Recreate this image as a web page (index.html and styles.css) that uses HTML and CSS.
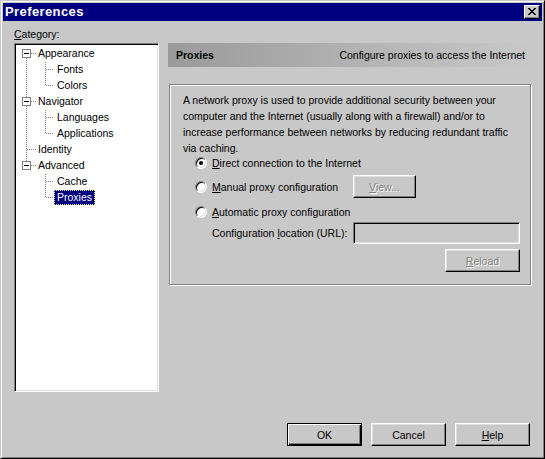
FILE: index.html
```html
<!DOCTYPE html>
<html>
<head>
<meta charset="utf-8">
<link rel="stylesheet" href="styles.css">
</head>
<body>
<div class="window">
  <div class="titlebar">
    <span class="title">Preferences</span>
    <div class="close">
      <svg width="8" height="7" viewBox="0 0 8 7" shape-rendering="crispEdges">
        <path d="M0 0h2v1h-2zM6 0h2v1h-2zM1 1h2v1h-2zM5 1h2v1h-2zM2 2h4v1h-4zM3 3h2v1h-2zM2 4h4v1h-4zM1 5h2v1h-2zM5 5h2v1h-2zM0 6h2v1h-2zM6 6h2v1h-2z" fill="#000"/>
      </svg>
    </div>
  </div>
  <div class="content">
    <div class="main">
      <div class="left">
        <div class="cat-label"><u>C</u>ategory:</div>
        <div class="tree">
          <svg class="tree-lines" width="141" height="170" shape-rendering="crispEdges">
            <g stroke="#808080" stroke-width="1" stroke-dasharray="1 1" fill="none">
              <path d="M9.5 13v103"/>
              <path d="M14 8.5h6M14 56.5h6M14 120.5h6M10 104.5h10"/>
              <path d="M28.5 17v23M28.5 65v23M28.5 129v23"/>
              <path d="M29 24.5h8M29 40.5h8M29 72.5h8M29 88.5h8M29 136.5h8M29 152.5h8"/>
            </g>
            <g>
              <rect x="5.5" y="4.5" width="8" height="8" fill="#fff" stroke="#808080"/>
              <rect x="5.5" y="52.5" width="8" height="8" fill="#fff" stroke="#808080"/>
              <rect x="5.5" y="116.5" width="8" height="8" fill="#fff" stroke="#808080"/>
              <path d="M7 8.5h5M7 56.5h5M7 120.5h5" stroke="#000"/>
            </g>
          </svg>
          <div class="row root"><span class="lbl">Appearance</span></div>
          <div class="row child"><span class="lbl">Fonts</span></div>
          <div class="row child"><span class="lbl">Colors</span></div>
          <div class="row root"><span class="lbl">Navigator</span></div>
          <div class="row child"><span class="lbl">Languages</span></div>
          <div class="row child"><span class="lbl">Applications</span></div>
          <div class="row root"><span class="lbl">Identity</span></div>
          <div class="row root"><span class="lbl">Advanced</span></div>
          <div class="row child"><span class="lbl">Cache</span></div>
          <div class="row child"><span class="lbl selected">Proxies</span></div>
        </div>
      </div>
      <div class="right">
        <div class="header">
          <span class="h-title">Proxies</span>
          <span class="h-desc">Configure proxies to access the Internet</span>
        </div>
        <div class="group">
          <p class="desc">A network proxy is used to provide additional security between your<br>computer and the Internet (usually along with a firewall) and/or to<br>increase performance between networks by reducing redundant traffic<br>via caching.</p>
          <div class="opt opt1">
            <span class="radio checked"></span>
            <span class="opt-label"><u>D</u>irect connection to the Internet</span>
          </div>
          <div class="opt opt2">
            <span class="radio"></span>
            <span class="opt-label opt-fixed"><u>M</u>anual proxy configuration</span>
            <span class="btn disabled view"><span class="btxt"><u>V</u>iew...</span></span>
          </div>
          <div class="opt opt3">
            <span class="radio"></span>
            <span class="opt-label"><u>A</u>utomatic proxy configuration</span>
          </div>
          <div class="opt opt4">
            <span class="opt-label opt-fixed indent">Configuration <u>l</u>ocation (URL):</span>
            <span class="textbox"></span>
          </div>
          <div class="opt opt5">
            <span class="btn disabled reload"><span class="btxt"><u>R</u>eload</span></span>
          </div>
        </div>
      </div>
    </div>
    <div class="buttons">
      <span class="btn default"><span class="btxt">OK</span></span>
      <span class="btn"><span class="btxt">Cancel</span></span>
      <span class="btn"><span class="btxt"><u>H</u>elp</span></span>
    </div>
  </div>
</div>
</body>
</html>
```

FILE: styles.css
```css
* { box-sizing: border-box; }
html, body {
  margin: 0;
  padding: 0;
  background: #c8c8c8;
}
body {
  font-family: "Liberation Sans", Arial, sans-serif;
  font-size: 10.5px;
  color: #000;
}
u { text-decoration: underline; text-underline-offset: 1px; }

.window {
  width: 545px;
  height: 459px;
  background: #c8c8c8;
  border-top: 1px solid #c8c8c8;
  border-left: 1px solid #c8c8c8;
  border-right: 1px solid #000;
  border-bottom: 1px solid #000;
  box-shadow: inset 1px 1px 0 #fff, inset -1px -1px 0 #808080;
  padding: 2px;
  display: flex;
  flex-direction: column;
}

.titlebar {
  height: 18px;
  background: #000080;
  display: flex;
  align-items: center;
  justify-content: space-between;
  padding: 0 2px 0 2px;
}
.title {
  color: #fff;
  font-weight: bold;
  font-size: 13px;
  letter-spacing: 0.4px;
  line-height: 16px;
}
.close {
  width: 16px;
  height: 14px;
  background: #c8c8c8;
  border-top: 1px solid #fff;
  border-left: 1px solid #fff;
  border-right: 1px solid #000;
  border-bottom: 1px solid #000;
  box-shadow: inset -1px -1px 0 #808080;
  display: flex;
  align-items: center;
  justify-content: center;
  padding: 0 1px 1px 0;
}
.close svg { display: block; }

.content {
  flex: 1;
  display: flex;
  flex-direction: column;
  padding: 7px 10px 10px 11px;
}
.main {
  display: flex;
  gap: 9px;
  align-items: flex-start;
}
.left {
  width: 145px;
  display: flex;
  flex-direction: column;
}
.cat-label {
  line-height: 13px;
  height: 13px;
  margin-bottom: 2px;
}
.tree {
  position: relative;
  width: 145px;
  height: 349px;
  background: #fff;
  border-top: 1px solid #808080;
  border-left: 1px solid #808080;
  border-right: 1px solid #fff;
  border-bottom: 1px solid #fff;
  box-shadow: inset 1px 1px 0 #000, inset -1px -1px 0 #dfdfdf;
  padding: 1px 2px;
}
.tree-lines {
  position: absolute;
  left: 2px;
  top: 1px;
}
.row {
  position: relative;
  height: 16px;
  display: flex;
  align-items: center;
}
.row.root { padding-left: 18px; }
.row.child { padding-left: 37px; }
.lbl {
  line-height: 13px;
  padding: 0 2px;
  border: 1px solid transparent;
  white-space: nowrap;
}
.lbl.selected {
  background: #000080;
  color: #fff;
  border: 1px dotted #e8e880;
}

.right {
  width: 364px;
  padding-top: 15px;
  display: flex;
  flex-direction: column;
}
.header {
  height: 24px;
  background: linear-gradient(to right, #9a9a9a 0%, #b4b4b4 55%, #c8c8c8 100%);
  display: flex;
  align-items: center;
  justify-content: space-between;
  padding: 0 7px 0 8px;
}
.h-title { font-weight: bold; }

.group {
  margin-top: 17px;
  margin-left: 1px;
  width: 362px;
  border: 1px solid #808080;
  box-shadow: inset 1px 1px 0 #fff, 1px 1px 0 #fff;
  padding: 7px 10px 12px 13px;
}
.desc {
  margin: 0;
  line-height: 16px;
  white-space: nowrap;
}
.opt {
  display: flex;
  align-items: center;
  padding-left: 12px;
}
.opt1 { height: 14px; }
.opt2 { height: 23px; margin-top: 5px; }
.opt3 { height: 16px; margin-top: 6px; }
.opt4 { height: 22px; margin-top: 2px; }
.opt5 { height: 23px; margin-top: 5px; justify-content: flex-end; }
.radio {
  width: 12px;
  height: 12px;
  border-radius: 50%;
  flex: none;
  background: #fff;
  border: 1px solid;
  border-color: #808080 #fff #fff #808080;
  box-shadow: inset 1px 1px 0 #000, inset -1px -1px 0 #dfdfdf;
  position: relative;
  margin-right: 5px;
}
.radio.checked::after {
  content: "";
  position: absolute;
  left: 3px;
  top: 3px;
  width: 4px;
  height: 4px;
  border-radius: 50%;
  background: #000;
}
.opt-label { white-space: nowrap; }
.opt-fixed { width: 141px; }
.opt-label.indent { margin-left: 17px; }
.textbox {
  width: 168px;
  height: 22px;
  background: #c8c8c8;
  border-top: 1px solid #808080;
  border-left: 1px solid #808080;
  border-right: 1px solid #fff;
  border-bottom: 1px solid #fff;
  box-shadow: inset 1px 1px 0 #000, inset -1px -1px 0 #dfdfdf;
}

.btn {
  display: flex;
  align-items: center;
  justify-content: center;
  width: 75px;
  height: 23px;
  background: #c8c8c8;
  border-top: 1px solid #fff;
  border-left: 1px solid #fff;
  border-right: 1px solid #000;
  border-bottom: 1px solid #000;
  box-shadow: inset -1px -1px 0 #808080, inset 1px 1px 0 #dfdfdf;
  flex: none;
}
.btn.view { width: 63px; }
.btn.disabled .btxt {
  color: #808080;
  text-shadow: 1px 1px 0 #fff;
}
.btn.default {
  border: 1px solid #000;
  box-shadow: inset 1px 1px 0 #fff, inset -1px -1px 0 #000, inset -2px -2px 0 #808080;
}

.buttons {
  margin-top: auto;
  display: flex;
  justify-content: flex-end;
  gap: 9px;
  padding-right: 2px;
}
```
